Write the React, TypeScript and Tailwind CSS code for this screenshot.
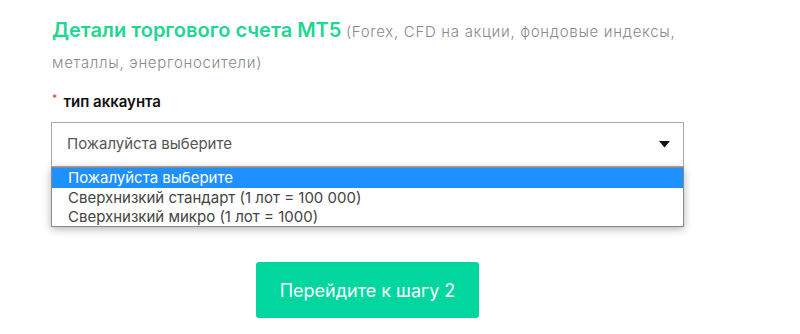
export default function App() {
  const options = [
    "Пожалуйста выберите",
    "Сверхнизкий стандарт (1 лот = 100 000)",
    "Сверхнизкий микро (1 лот = 1000)",
  ];

  return (
    <div className="h-[334px] w-[800px] bg-white font-['Inter',sans-serif] overflow-hidden">
      <div className="pl-[52px] pt-[15px]">
        <h2 className="w-[630px] leading-[30px] text-[#666]">
          <span className="text-[20px] font-semibold text-[#1fd694]">Детали торгового счета МТ5</span>{" "}
          <span className="text-[15px] font-light tracking-[0.7px] text-[#8a8a8a]">
            (Forex, CFD на акции, фондовые индексы, металлы, энергоносители)
          </span>
        </h2>

        <div className="mt-[15px] flex items-start gap-[6px] text-[15px] font-semibold text-[#111]">
          <span className="mt-[-2px] text-[10px] leading-[14px] text-[#e05050]">*</span>
          <span className="leading-[18px]">тип аккаунта</span>
        </div>

        <div className="relative mt-[11px] -ml-[1px] w-[633px]">
          <div className="flex h-[45px] items-center justify-between border border-[#aaa] bg-white pl-[15px] pr-[13px] text-[15px] text-[#555]">
            <span>Пожалуйста выберите</span>
            <svg width="11" height="7" viewBox="0 0 11 7">
              <path d="M0 0h11L5.5 6.5z" fill="#111" />
            </svg>
          </div>

          <ul className="absolute left-0 top-[45px] w-[633px] border border-[#8a8a8a] bg-white text-[15px] text-[#444] shadow-[0_2px_8px_rgba(0,0,0,0.3)]">
            {options.map((o, i) => (
              <li
                key={o}
                className={
                  i === 0
                    ? "h-[20px] bg-[#1e90ff] pl-[16px] leading-[20px] text-white"
                    : "h-[19px] pl-[16px] leading-[19px]"
                }
              >
                {o}
              </li>
            ))}
          </ul>
        </div>

        <div className="ml-[204px] mt-[95px]">
          <button className="h-[56px] w-[223px] rounded-[3px] bg-[#00d69e] text-[18px] text-white">
            Перейдите к шагу 2
          </button>
        </div>
      </div>
    </div>
  );
}
